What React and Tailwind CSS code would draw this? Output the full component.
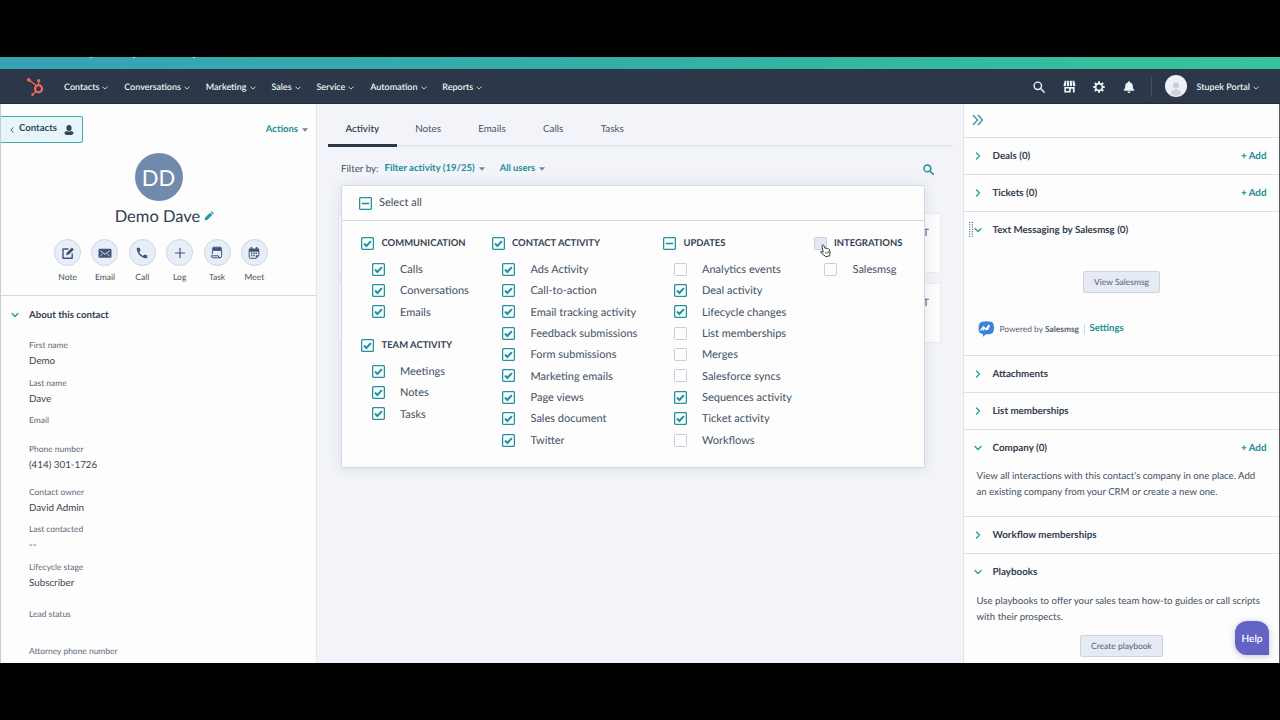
import { FaHubspot, FaBell } from 'react-icons/fa';
import { MdCall } from 'react-icons/md';

const navItems = ['Contacts', 'Conversations', 'Marketing', 'Sales', 'Service', 'Automation', 'Reports'];

const tabs = ['Activity', 'Notes', 'Emails', 'Calls', 'Tasks'];

const fields = [
  { label: 'First name', value: 'Demo', height: 'h-[38px]' },
  { label: 'Last name', value: 'Dave', height: 'h-[37px]' },
  { label: 'Email', value: '', height: 'h-[29px]' },
  { label: 'Phone number', value: '(414) 301-1726', height: 'h-[43px]' },
  { label: 'Contact owner', value: 'David Admin', height: 'h-[37px]' },
  { label: 'Last contacted', value: '--', height: 'h-[38px]' },
  { label: 'Lifecycle stage', value: 'Subscriber', height: 'h-[47px]' },
  { label: 'Lead status', value: '', height: 'h-[37px]' },
  { label: 'Attorney phone number', value: '', height: 'h-[20px]' },
];

const filterColumns = [
  {
    width: 'w-[130.5px]',
    groups: [
      {
        title: 'COMMUNICATION',
        state: 'on',
        items: [['Calls', 'on'], ['Conversations', 'on'], ['Emails', 'on']],
      },
      {
        title: 'TEAM ACTIVITY',
        state: 'on',
        items: [['Meetings', 'on'], ['Notes', 'on'], ['Tasks', 'on']],
      },
    ],
  },
  {
    width: 'w-[171.5px]',
    groups: [
      {
        title: 'CONTACT ACTIVITY',
        state: 'on',
        items: [
          ['Ads Activity', 'on'],
          ['Call-to-action', 'on'],
          ['Email tracking activity', 'on'],
          ['Feedback submissions', 'on'],
          ['Form submissions', 'on'],
          ['Marketing emails', 'on'],
          ['Page views', 'on'],
          ['Sales document', 'on'],
          ['Twitter', 'on'],
        ],
      },
    ],
  },
  {
    width: 'w-[150.5px]',
    groups: [
      {
        title: 'UPDATES',
        state: 'some',
        items: [
          ['Analytics events', 'off'],
          ['Deal activity', 'on'],
          ['Lifecycle changes', 'on'],
          ['List memberships', 'off'],
          ['Merges', 'off'],
          ['Salesforce syncs', 'off'],
          ['Sequences activity', 'on'],
          ['Ticket activity', 'on'],
          ['Workflows', 'off'],
        ],
      },
    ],
  },
  {
    width: 'w-[100px]',
    groups: [{ title: 'INTEGRATIONS', state: 'hover', items: [['Salesmsg', 'off']] }],
  },
];

function Chevron({ className = '', strokeWidth = 1.5 }) {
  return (
    <svg viewBox="0 0 8 8" className={className} fill="none" stroke="currentColor" strokeWidth={strokeWidth}>
      <path d="M1 2.5 4 5.5 7 2.5" strokeLinecap="round" strokeLinejoin="round" />
    </svg>
  );
}

function Caret({ className = '' }) {
  return (
    <svg viewBox="0 0 6 4" className={`h-[4px] w-[6px] text-[#6b8794] ${className}`}>
      <path d="M0 .3h6L3 3.7z" fill="currentColor" />
    </svg>
  );
}

function SearchIcon({ className = '', strokeWidth = 1.4 }) {
  return (
    <svg viewBox="0 0 12 12" className={className} fill="none" stroke="currentColor" strokeWidth={strokeWidth}>
      <circle cx="4.8" cy="4.8" r="3.7" />
      <path d="M7.6 7.6 11.2 11.2" strokeLinecap="round" />
    </svg>
  );
}

function StoreIcon() {
  return (
    <svg viewBox="0 0 13 13" className="size-[13px]" fill="currentColor">
      <path d="M1.8.8h1.7L3.1 5H.6zM4.2.8h1.9V5H3.9zM6.9.8h1.9L9.1 5H6.9zM9.5.8h1.7L12.4 5H9.9z" />
      <path d="M.5 5h2.6a1.3 1.3 0 0 1-2.6 0M3.8 5h2.4a1.2 1.2 0 0 1-2.4 0M6.8 5h2.4a1.2 1.2 0 0 1-2.4 0M9.9 5h2.6a1.3 1.3 0 0 1-2.6 0" />
      <path fillRule="evenodd" d="M1.3 7h10.4v5.6H9.9V8.7H7.7v3.9H1.3zM3 8.6v2.5h3V8.6z" />
    </svg>
  );
}

function GearIcon() {
  return (
    <svg viewBox="-6 -6 12 12" className="size-[12px]">
      <circle r="3.4" fill="none" stroke="currentColor" strokeWidth="1.7" />
      {[0, 45, 90, 135, 180, 225, 270, 315].map((angle) => (
        <rect key={angle} x="-1" y="-5.8" width="2" height="2.2" rx=".4" fill="currentColor" transform={`rotate(${angle})`} />
      ))}
    </svg>
  );
}

const actionIcons = {
  Note: (
    <svg viewBox="0 0 14 14" className="size-[14px]" fill="none" stroke="currentColor">
      <path d="M7.5 3H2v9.2h9.2V7.6" strokeWidth="1.4" strokeLinejoin="round" />
      <path d="m5.6 8.8.5-2.1L10.9 2l1.6 1.6-4.8 4.7z" fill="currentColor" strokeWidth=".8" strokeLinejoin="round" />
    </svg>
  ),
  Email: (
    <svg viewBox="0 0 14 14" className="size-[14px]">
      <rect x=".5" y="2.8" width="13" height="9" rx="1.2" fill="currentColor" />
      <path d="m2.4 4.8 4.6 3.6 4.6-3.6M2.4 10l2-1.8M11.6 10l-2-1.8" fill="none" stroke="#eaf0f8" strokeWidth=".9" />
    </svg>
  ),
  Call: <MdCall className="size-[14px]" />,
  Log: (
    <svg viewBox="0 0 14 14" className="size-[14px]" stroke="currentColor" strokeWidth="1.2">
      <path d="M7 2v10M2 7h10" />
    </svg>
  ),
  Task: (
    <svg viewBox="0 0 14 14" className="size-[14px]" fill="none" stroke="currentColor">
      <path d="M2.6 2.2a1 1 0 0 1 1-1h6.8a1 1 0 0 1 1 1v2.3H2.6z" fill="currentColor" strokeWidth=".8" />
      <path d="M2.4 4.500v3.700M11.600 4.500v5.300q0 2-1.600 2H3.300q-1.900 0-2.100-2h7.300q.2 2 1.500 2" strokeWidth="1" />
    </svg>
  ),
  Meet: (
    <svg viewBox="0 0 14 14" className="size-[14px]" fill="none" stroke="currentColor">
      <path d="M2.2 5.2h9.6v4.3l-2.5 2.8H3.2a1 1 0 0 1-1-1z" strokeWidth="1" />
      <path d="M1.7 5.2V3.4a1 1 0 0 1 1-1h8.6a1 1 0 0 1 1 1v1.800z" fill="currentColor" stroke="none" />
      <path d="M4.4 1v2M9.6 1v2" strokeWidth="1.5" />
      <path d="M4 7.3h1.4M6.3 7.3h1.4M8.6 7.3H10M4 9.5h1.4M6.3 9.5h1.4" strokeWidth="1.4" />
      <path d="M8.8 12.3V9.3h3z" fill="currentColor" stroke="none" />
    </svg>
  ),
};

function Checkbox({ state }) {
  if (state === 'off') {
    return <span className="size-[13px] shrink-0 rounded-[1.5px] border border-[#c6cfda] bg-[#fdfdfe]" />;
  }
  if (state === 'hover') {
    return <span className="size-[13px] shrink-0 rounded-[1.5px] border border-[#c6cfdf] bg-[#e3e8f4]" />;
  }
  return (
    <svg viewBox="0 0 13 13" className="size-[13px] shrink-0" fill="none" stroke="#23919b">
      <rect x=".6" y=".6" width="11.8" height="11.8" rx="1.2" strokeWidth="1.3" fill="#fdfeff" />
      {state === 'on' ? (
        <path d="m3 6.6 2.4 2.3 4.5-4.8" strokeWidth="2.1" />
      ) : (
        <path d="M2.8 6.5h7.4" strokeWidth="1.6" />
      )}
    </svg>
  );
}

function Banner() {
  return (
    <div className="flex h-[12px] shrink-0 items-start bg-linear-to-r from-[#35a3b4] via-[#33afa6] to-[#36c49b]">
      <span className="ml-[90px] h-px w-[2px] bg-white/70" />
      <span className="ml-[41px] h-px w-[2px] bg-white/70" />
      <span className="ml-[58px] h-px w-[2px] bg-white/70" />
    </div>
  );
}

function NavBar() {
  return (
    <div className="flex h-[35px] shrink-0 items-center border-b border-[#222c3a] bg-[#2c3849] pt-px text-[9px] font-semibold text-[#eef1f5]">
      <FaHubspot className="ml-[25.5px] mt-px size-[18px] text-[#ee6a5b]" />
      <div className="ml-[20.5px] mt-px flex gap-[15.8px]">
        {navItems.map((item) => (
          <span key={item} className="flex items-center gap-[3px]">
            {item}
            <Chevron className="mt-px size-[6px]" strokeWidth={1.1} />
          </span>
        ))}
      </div>
      <div className="ml-auto flex items-center">
        <SearchIcon className="size-[12px]" />
        <span className="ml-[18px]"><StoreIcon /></span>
        <span className="ml-[17.5px]"><GearIcon /></span>
        <FaBell className="ml-[18px] size-[12px]" />
        <span className="ml-[16px] h-[20px] w-px bg-[#445263]" />
        <svg viewBox="0 0 22 22" className="-mt-[2px] ml-[13px] size-[22px]">
          <circle cx="11" cy="11" r="11" fill="#eef1f8" />
          <circle cx="11" cy="10.5" r="3" fill="#c5cedb" />
          <path d="M5.5 18.5q0-4 5.5-4t5.5 4A9.5 9.5 0 0 1 11 21a9.5 9.5 0 0 1-5.5-2.5" fill="#cbd4e0" />
        </svg>
        <span className="ml-[9px] mr-[21.5px] mt-px flex items-center gap-[2.5px]">
          Stupek Portal
          <Chevron className="mt-px size-[6px]" strokeWidth={1.1} />
        </span>
      </div>
    </div>
  );
}

function ContactPanel() {
  return (
    <aside className="flex w-[317px] shrink-0 flex-col overflow-hidden border-x border-l-[#c9cbce] border-r-[#e3e7ee] bg-[#fdfdfd]">
      <div className="mt-[12px] flex h-[27px] shrink-0 items-center justify-between">
        <div className="-ml-px flex h-[27px] w-[83px] items-center rounded-r-[2px] border border-[#4fa6ad] bg-[#e5f5f8] text-[9.6px] font-bold text-[#33475b]">
          <Chevron className="ml-[8px] size-[6px] rotate-90" strokeWidth={1.2} />
          <span className="ml-[4px] w-[42px]">Contacts</span>
          <svg viewBox="0 0 10 10" className="ml-[3px] size-[10px]" fill="currentColor">
            <ellipse cx="5" cy="3" rx="2.6" ry="3" />
            <path d="M.4 8.2Q.4 6.3 3 6q2 1.2 4 0 2.6.3 2.6 2.2Q9.6 10 5 10T.4 8.2" />
          </svg>
        </div>
        <div className="mr-[8px] mt-px flex items-center gap-[4px] text-[9.5px] font-bold text-[#238d97]">
          Actions
          <Caret />
        </div>
      </div>
      <div className="mt-[10px] flex flex-col items-center">
        <div className="flex size-[48px] items-center justify-center rounded-full bg-[#728bac] text-[22px] text-white">DD</div>
        <div className="mt-[5px] flex h-[20px] items-center gap-[4px] pl-[12px] text-[16.5px] text-[#33404f]">
          Demo Dave
          <svg viewBox="0 0 10 10" className="size-[10px] text-[#249aa8]" fill="currentColor">
            <path d="m.6 9.4.6-2.9L6 1.7 8.3 4 3.5 8.8zM6.6 1.1l.7-.7q.3-.2.6 0l1.7 1.7q.2.3 0 .6l-.7.7z" />
          </svg>
        </div>
      </div>
      <div className="mt-[13px] flex justify-center gap-[9.35px] pl-[5px]">
        {Object.keys(actionIcons).map((name) => (
          <div key={name} className="flex w-[28px] flex-col items-center">
            <span className="flex size-[27px] items-center justify-center rounded-full border border-[#ccd5e2] bg-[#e8eef7] text-[#3f557a]">
              {actionIcons[name]}
            </span>
            <span className="mt-[5.5px] text-[8.5px] leading-[10px] text-[#46535f]">{name}</span>
          </div>
        ))}
      </div>
      <div className="mt-[13.5px] flex h-[39px] shrink-0 items-center border-t border-[#d5d8dd] text-[9.7px] font-bold text-[#33404f]">
        <Chevron className="ml-[10px] size-[8px] text-[#28a094]" strokeWidth={1.4} />
        <span className="ml-[10px]">About this contact</span>
      </div>
      <div className="mt-[3px] pl-[28px]">
        {fields.map((field) => (
          <div key={field.label} className={field.height}>
            <div className="text-[8.45px] leading-[16px] text-[#5b6a7a]">{field.label}</div>
            <div className="text-[9.8px] leading-[16px] text-[#3c4753]">{field.value}</div>
          </div>
        ))}
      </div>
    </aside>
  );
}

function FilterMenu() {
  return (
    <div className="absolute left-[24px] top-[81px] h-[283px] w-[584px] rounded-[2px] border border-[#d3d8e0] bg-[#fdfdfd] text-[11px] text-[#435061] shadow-[0_1px_14px_rgba(45,62,80,0.12)]">
      <div className="flex h-[35px] items-center border-b border-[#d5dae2] pl-[17px]">
        <Checkbox state="some" />
        <span className="ml-[7px] pt-px">Select all</span>
      </div>
      <div className="flex pl-[19px] pt-[12px]">
        {filterColumns.map((column) => (
          <div key={column.groups[0].title} className={`shrink-0 ${column.width}`}>
            {column.groups.map((group) => (
              <div key={group.title} className="mb-[12.5px]">
                <div className="flex h-[21px] items-center">
                  <Checkbox state={group.state} />
                  <span className="ml-[7.5px] whitespace-nowrap pt-px text-[9.45px] font-bold text-[#33404f]">{group.title}</span>
                </div>
                <div className="pl-[10.5px] pt-[4.5px]">
                  {group.items.map(([label, state]) => (
                    <div key={label} className="flex h-[21.37px] items-center">
                      <Checkbox state={state} />
                      <span className="ml-[15.5px] whitespace-nowrap pt-[2px]">{label}</span>
                    </div>
                  ))}
                </div>
              </div>
            ))}
          </div>
        ))}
      </div>
      <svg viewBox="0 0 12 14" className="absolute left-[478px] top-[58px] h-[13px] w-[11px]">
        <path
          d="M2.6 1.2q1-.8 1.7.4l1.2 3q1-.6 1.6.2 1-.4 1.5.4 1.2-.2 1.6.9l.7 2.3q.4 1.8-.4 3.2l.2 1.2-4.6 1-.6-1Q3.5 11.8 1 9.2q-.6-1.2.6-1.2l1.9.9L2.3 2.7q-.3-1 .3-1.5"
          fill="#fff"
          stroke="#222a33"
          strokeWidth="1"
        />
        <path d="m6 8.5.6 2.3M7.6 8.1l.6 2.3M9.2 7.7l.5 2.3" stroke="#222a33" strokeWidth=".7" />
      </svg>
    </div>
  );
}

function ActivityPanel() {
  return (
    <main className="relative flex w-[646px] shrink-0 flex-col bg-[#f2f4f9]">
      <div className="ml-[11px] mr-[10px] flex h-[43px] border-b-2 border-[#e4e7ed] text-[9.8px] text-[#46535f]">
        {tabs.map((tab) => (
          <div
            key={tab}
            className={
              tab === 'Activity'
                ? 'flex h-[43px] w-[68.5px] items-center justify-center border-b-3 border-[#2c3849] pt-[10px] font-semibold text-[#33404f]'
                : 'flex h-[43px] items-center px-[18.7px] pt-[7px]'
            }
          >
            {tab}
          </div>
        ))}
      </div>
      <div className="mt-[12px] flex h-[20px] items-center px-[24px] text-[9.8px] text-[#435061]">
        Filter by:
        <span className="ml-[6px] mr-[4px] text-[9.55px] font-bold text-[#238d97]">Filter activity (19/25)</span>
        <Caret />
        <span className="ml-[15px] mr-[4px] text-[9.4px] font-bold text-[#238d97]">All users</span>
        <Caret />
        <SearchIcon className="ml-auto mr-[5.5px] mt-px size-[11px] text-[#238d97]" strokeWidth={1.7} />
      </div>
      <div className="ml-[21px] mt-[34px] flex w-[603px] flex-col gap-[10px] text-right text-[10px] font-semibold text-[#65758a]">
        <div className="h-[60px] rounded-[2px] border border-[#e9ebf1] bg-[#fdfdfd] pr-[11px] pt-[12px]">CDT</div>
        <div className="h-[60px] rounded-[2px] border border-[#e9ebf1] bg-[#fdfdfd] pr-[11px] pt-[12px]">CDT</div>
      </div>
      <FilterMenu />
    </main>
  );
}

function Section({ title, open, add, grip, height, children }) {
  return (
    <section className={`relative shrink-0 border-b border-[#dcdfe5] ${height}`}>
      {grip && (
        <svg viewBox="0 0 4 15" className="absolute left-[5px] top-[10px] h-[15px] w-[4px] text-[#33404f]">
          <path d="M.7 0v15M3.3 0v15" stroke="currentColor" strokeWidth="1" strokeDasharray="1 1.3" />
        </svg>
      )}
      <div className="flex h-[36px] items-center text-[9.8px] font-bold text-[#33404f]">
        <Chevron className={open ? 'ml-[10px] size-[8px] text-[#28a0a0]' : 'ml-[10px] size-[8px] -rotate-90 text-[#28a0a0]'} strokeWidth={1.4} />
        <span className="ml-[10.5px] pt-px">{title}</span>
        {add && <span className="ml-auto mr-[12.5px] text-[#238d97]">+ Add</span>}
      </div>
      {children}
    </section>
  );
}

function Sidebar() {
  return (
    <aside className="flex flex-1 flex-col overflow-hidden border-l border-r border-l-[#dfe3ea] border-r-[#55585d] bg-[#fdfdfd]">
      <div className="flex h-[34px] shrink-0 items-center border-b border-[#dcdfe5] pb-[2px] pl-[8px]">
        <svg viewBox="0 0 12 12" className="size-[12px] text-[#2b98a3]" fill="none" stroke="currentColor" strokeWidth="1.3">
          <path d="m1 1 4.5 5L1 11M6 1l4.5 5L6 11" />
        </svg>
      </div>
      <Section title="Deals (0)" add height="h-[37px]" />
      <Section title="Tickets (0)" add height="h-[37px]" />
      <Section title="Text Messaging by Salesmsg (0)" open grip height="h-[144px]">
        <div className="mt-[23px] flex justify-center">
          <span className="flex h-[22px] w-[77px] items-center justify-center rounded-[2px] border border-[#ccd4e2] bg-[#e6eaf4] text-[8.5px] text-[#51617a]">
            View Salesmsg
          </span>
        </div>
        <div className="mt-[27px] flex h-[18px] items-center pl-[14px] text-[8.4px] text-[#566478]">
          <svg viewBox="0 0 17 16" className="h-[16px] w-[17px]">
            <path d="M4 .7Q8.5-.2 13 .7q3 .6 3 6t-3 6q-2 .5-5 .5L5 15.7v-2.6q-4-.3-4.3-4L.6 6.7Q.6 1.4 4 .7" fill="#3b82dc" />
            <path d="m2.5 9.5 3-3.7 2.2 2.7 3.4-4.5M5.5 9.5V6M7.7 8.5l2.3-.5 1.500-4" fill="none" stroke="#fff" strokeWidth="1.3" />
          </svg>
          <span className="ml-[4.5px] pt-px">Powered by <b>Salesmsg</b></span>
          <span className="ml-[5px] h-[10px] w-px bg-[#cfd5de]" />
          <span className="ml-[4.5px] text-[9.6px] font-bold text-[#238d97]">Settings</span>
        </div>
      </Section>
      <Section title="Attachments" height="h-[37px]" />
      <Section title="List memberships" height="h-[37px]" />
      <Section title="Company (0)" open add height="h-[87px]">
        <p className="mt-[2.5px] whitespace-nowrap pl-[12.5px] text-[9.62px] leading-[16px] text-[#435061]">
          View all interactions with this contact’s company in one place. Add
          <br />
          an existing company from your CRM or create a new one.
        </p>
      </Section>
      <Section title="Workflow memberships" height="h-[37px]" />
      <Section title="Playbooks" open height="h-[120px]">
        <p className="mt-[2.5px] whitespace-nowrap pl-[12.5px] text-[9.65px] leading-[16px] text-[#435061]">
          Use playbooks to offer your sales team how-to guides or call scripts
          <br />
          with their prospects.
        </p>
        <div className="mt-[10.5px] flex justify-center">
          <span className="flex h-[22px] w-[83px] items-center justify-center rounded-[2px] border border-[#ccd4e2] bg-[#e6eaf4] text-[8.5px] text-[#51617a]">
            Create playbook
          </span>
        </div>
      </Section>
    </aside>
  );
}

function App() {
  return (
    <div className="relative flex h-[720px] w-[1280px] flex-col overflow-hidden bg-black pt-[57px] font-['Lato','Open_Sans',sans-serif] [text-rendering:geometricPrecision]">
      <Banner />
      <NavBar />
      <div className="flex h-[559px] shrink-0 overflow-hidden">
        <ContactPanel />
        <ActivityPanel />
        <Sidebar />
      </div>
      <div className="absolute left-[1235px] top-[621px] flex size-[34px] items-center justify-center rounded-[12px] rounded-br-none bg-[#6263c5] pt-[2px] text-[10px] font-semibold text-white shadow-[0_1px_6px_rgba(45,62,80,0.3)]">
        Help
      </div>
    </div>
  );
}

export default App;
